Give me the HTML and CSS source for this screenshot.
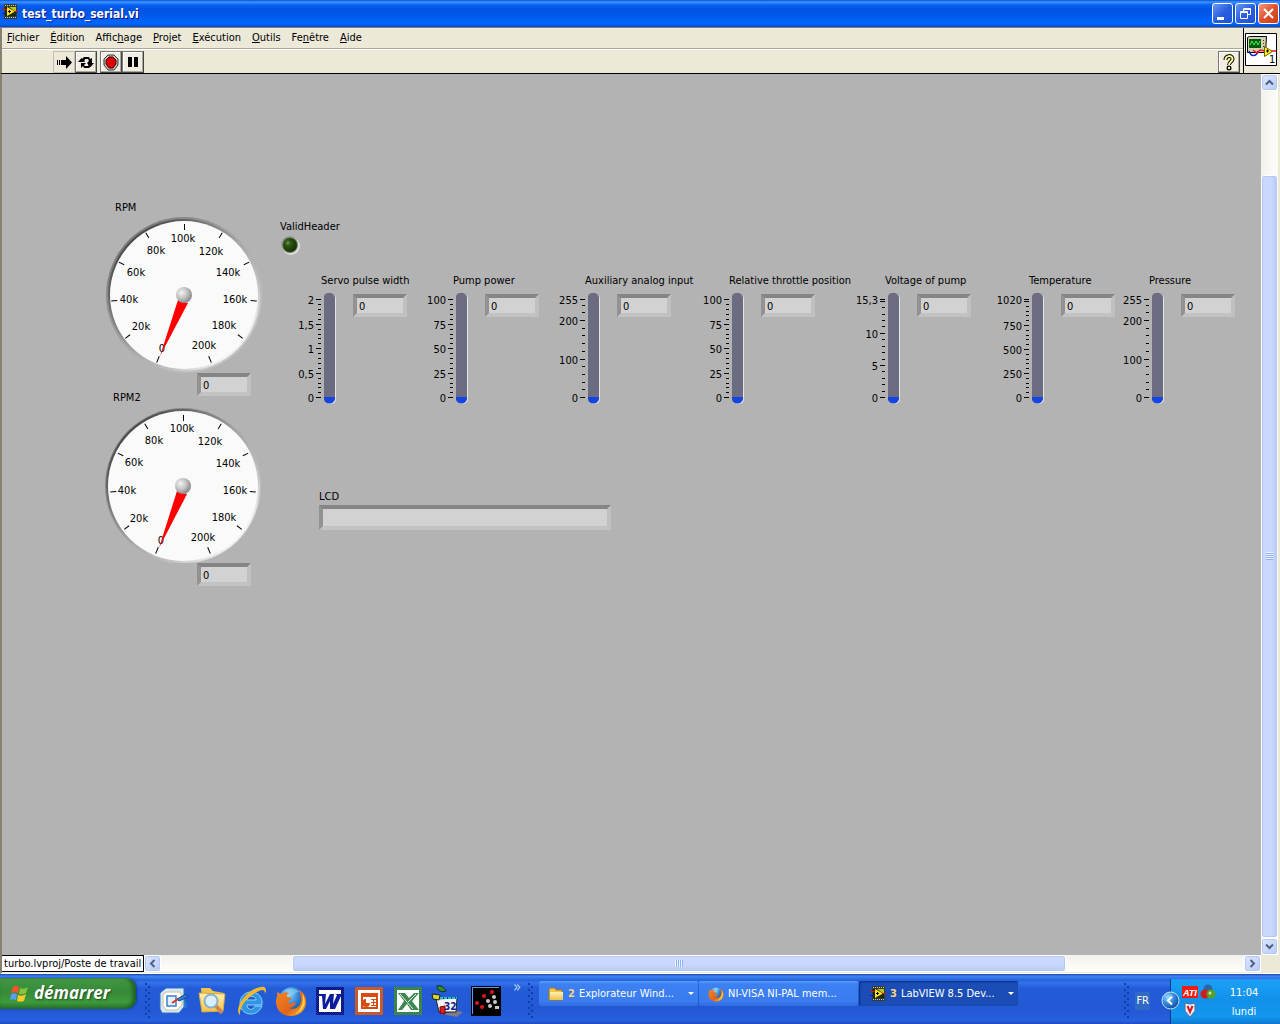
FILE: index.html
```html
<!DOCTYPE html>
<html lang="fr">
<head>
<meta charset="utf-8">
<title>test_turbo_serial.vi</title>
<link rel="stylesheet" href="styles.css">
</head>
<body>
<svg class="defs" width="0" height="0" aria-hidden="true">
  <defs>
    <linearGradient id="rim" x1="0.15" y1="0.15" x2="0.85" y2="0.85">
      <stop offset="0" stop-color="#4a4a4a"/><stop offset="0.3" stop-color="#808080"/><stop offset="0.55" stop-color="#aaaaaa"/><stop offset="0.8" stop-color="#c4c4c4"/><stop offset="1" stop-color="#f4f4f4"/>
    </linearGradient>
    <linearGradient id="rim-out" x1="0.15" y1="0.15" x2="0.85" y2="0.85">
      <stop offset="0" stop-color="#7c7c7c"/><stop offset="0.5" stop-color="#aaaaaa"/><stop offset="1" stop-color="#c6c6c6"/>
    </linearGradient>
    <radialGradient id="hub" cx="0.35" cy="0.35" r="0.7">
      <stop offset="0" stop-color="#f4f4f4"/><stop offset="0.5" stop-color="#c4c4c4"/><stop offset="1" stop-color="#858585"/>
    </radialGradient>
    <radialGradient id="led" cx="0.35" cy="0.35" r="0.7">
      <stop offset="0" stop-color="#6f9460"/><stop offset="0.3" stop-color="#2c5512"/><stop offset="1" stop-color="#143004"/>
    </radialGradient>
    <radialGradient id="blueball" cx="0.35" cy="0.3" r="0.8">
      <stop offset="0" stop-color="#9adcff"/><stop offset="0.5" stop-color="#2f84d8"/><stop offset="1" stop-color="#123c90"/>
    </radialGradient>
    <linearGradient id="fox" x1="0" y1="0" x2="1" y2="1">
      <stop offset="0" stop-color="#f28a24"/><stop offset="0.6" stop-color="#e4631a"/><stop offset="1" stop-color="#fbc52e"/>
    </linearGradient>
    <linearGradient id="folder" x1="0" y1="0" x2="0" y2="1">
      <stop offset="0" stop-color="#fff3b0"/><stop offset="1" stop-color="#eebf4c"/>
    </linearGradient>
    <symbol id="ticks5" viewBox="0 0 6 120">
      <path class="tick" d="M0 11h5v1h-5zM0 36h5v1h-5zM0 60h5v1h-5zM0 85h5v1h-5zM0 109h5v1h-5zM2 16h3v1h-3zM2 21h3v1h-3zM2 26h3v1h-3zM2 31h3v1h-3zM2 41h3v1h-3zM2 46h3v1h-3zM2 50h3v1h-3zM2 55h3v1h-3zM2 65h3v1h-3zM2 70h3v1h-3zM2 75h3v1h-3zM2 80h3v1h-3zM2 90h3v1h-3zM2 95h3v1h-3zM2 99h3v1h-3zM2 104h3v1h-3z"/>
    </symbol>
    <symbol id="ticks255" viewBox="0 0 6 120">
      <path class="tick" d="M0 11h5v1h-5zM0 32h5v1h-5zM0 71h5v1h-5zM0 109h5v1h-5zM2 17h3v1h-3zM2 24h3v1h-3zM2 40h3v1h-3zM2 47h3v1h-3zM2 55h3v1h-3zM2 63h3v1h-3zM2 78h3v1h-3zM2 86h3v1h-3zM2 94h3v1h-3zM2 101h3v1h-3z"/>
    </symbol>
    <symbol id="ticks15" viewBox="0 0 6 120">
      <path class="tick" d="M0 11h5v1h-5zM0 13h5v1h-5zM0 45h5v1h-5zM0 77h5v1h-5zM0 109h5v1h-5zM2 19h3v1h-3zM2 26h3v1h-3zM2 32h3v1h-3zM2 38h3v1h-3zM2 51h3v1h-3zM2 58h3v1h-3zM2 64h3v1h-3zM2 71h3v1h-3zM2 83h3v1h-3zM2 90h3v1h-3zM2 96h3v1h-3zM2 103h3v1h-3z"/>
    </symbol>
    <symbol id="ticks1020" viewBox="0 0 6 120">
      <path class="tick" d="M0 11h5v1h-5zM0 13h5v1h-5zM0 37h5v1h-5zM0 61h5v1h-5zM0 85h5v1h-5zM0 109h5v1h-5zM2 18h3v1h-3zM2 23h3v1h-3zM2 27h3v1h-3zM2 32h3v1h-3zM2 42h3v1h-3zM2 47h3v1h-3zM2 51h3v1h-3zM2 56h3v1h-3zM2 66h3v1h-3zM2 71h3v1h-3zM2 75h3v1h-3zM2 80h3v1h-3zM2 90h3v1h-3zM2 95h3v1h-3zM2 99h3v1h-3zM2 104h3v1h-3z"/>
    </symbol>
    <symbol id="tube" viewBox="0 0 14 120">
      <rect x="-1" y="5" width="11" height="110" rx="5" fill="#8e8e8e"/>
      <rect x="1" y="6" width="11" height="110" rx="5" fill="#e4e4e4"/>
      <rect x="0" y="5" width="11" height="110" rx="5" fill="#6b6b82"/>
      <path d="M0 109h11v1a5 5 0 0 1-11 0z" fill="#1444e2"/>
    </symbol>
    <symbol id="dial-ticks" viewBox="-78 -78 156 156">
      <g stroke="#000" stroke-width="1">
        <path d="M0 66v7" transform="rotate(22)"/><path d="M0 67v6" transform="rotate(53.6)"/><path d="M0 67v6" transform="rotate(85.2)"/><path d="M0 67v6" transform="rotate(116.8)"/><path d="M0 67v6" transform="rotate(148.4)"/><path d="M.5 -71v6"/><path d="M0 67v6" transform="rotate(211.6)"/><path d="M0 67v6" transform="rotate(243.2)"/><path d="M0 67v6" transform="rotate(274.8)"/><path d="M0 67v6" transform="rotate(306.4)"/><path d="M0 66v7" transform="rotate(338)"/>
      </g>
    </symbol>
    <symbol id="vi" viewBox="0 0 16 16">
      <path d="M2 0h13v15H2z" fill="#3a3a34"/>
      <path d="M3 1h1v1H3zM5 1h1v1H5zM7 1h1v1H7zM9 1h1v1H9zM11 1h1v1h-1zM13 1h1v1h-1zM3 13h1v1H3zM5 13h1v1H5zM7 13h1v1H7zM9 13h1v1H9zM11 13h1v1h-1zM13 13h1v1h-1z" fill="#c8c8c8"/>
      <path d="M3 3h11v9H3z" fill="#1b2b08"/><path d="M7 3h7v5z" fill="#b8c818"/>
      <path d="M5 3v9l8-4.500z" fill="#ffe41c"/>
      <path d="M0 5.500h5M12 7.500h4" stroke="#e01010"/><path d="M0 9.500h5" stroke="#1020c0"/>
      <path d="M6 7.500h3M7.500 6v3" stroke="#000"/>
    </symbol>
    <symbol id="firefox" viewBox="0 0 32 32">
      <circle cx="17" cy="15" r="13" fill="url(#blueball)"/>
      <path d="M11 5c4-2 10-2 13 2-4 0-5 3-8 4-3 1-5-2-5-6z" fill="#8fd0f4" opacity=".6"/>
      <path d="M2 6c1 2 3 2 4 3 3-2 6-2 8-1-2 1-3 3-2 4l5 1c0 2-3 2-4 4 1 2 2 2 4 1 2-1 4 0 4 1-2 1-3 4-7 4 5 3 12-1 12-8 0-5-1-8-3-10 6 2 9 7 8 14-1 7-7 12-15 12C7 31 1 25 1 17c0-4 2-6 1-11z" fill="url(#fox)"/>
      <path d="M27 8c6 9 2 18-7 21 7-5 9-12 7-21z" fill="#fcd648"/>
    </symbol>
    <symbol id="up" viewBox="0 0 9 9"><path d="M1 6.500 4.500 3 8 6.500" fill="none" stroke="#4d6185" stroke-width="2"/></symbol>
    <pattern id="dots-blue" width="2" height="2" patternUnits="userSpaceOnUse"><path d="M0 0h1v1H0zM1 1h1v1H1z" fill="#0a1060"/></pattern>
    <pattern id="dots-grey" width="2" height="2" patternUnits="userSpaceOnUse"><path d="M0 0h1v1H0zM1 1h1v1H1z" fill="#8a7c78"/></pattern>
  </defs>
</svg>

<div class="window">
  <header class="titlebar">
    <svg class="app-icon" width="16" height="16"><use href="#vi"/></svg>
    <h1>test_turbo_serial.vi</h1>
    <div class="captions">
      <button class="cap" aria-label="Réduire"><svg width="19" height="19"><path d="M4 13h7v3H4z" fill="#fff"/></svg></button>
      <button class="cap" aria-label="Restaurer"><svg width="19" height="19" fill="none" stroke="#fff"><path d="M7.500 7V4.500h7v6H12M7 5.500h8"/><path d="M4.500 7.500h7v7h-7zM4 8.500h8"/></svg></button>
      <button class="cap close" aria-label="Fermer"><svg width="19" height="19"><path d="M5 5l9 9M14 5l-9 9" stroke="#fff" stroke-width="2"/></svg></button>
    </div>
  </header>

  <div class="bars">
    <div class="bar-rows">
      <nav class="menu">
        <button><u>F</u>ichier</button><button><u>É</u>dition</button><button>Affic<u>h</u>age</button><button><u>P</u>rojet</button><button><u>E</u>xécution</button><button><u>O</u>utils</button><button>Fe<u>n</u>être</button><button><u>A</u>ide</button>
      </nav>
      <div class="tools">
        <button class="tool flat" aria-label="Exécuter"><svg width="18" height="17"><path d="M2 6h1v5H2zM4 6h1v5H4zM6 6h5V2l6 6.500-6 6.500v-4H6z" fill="#000"/></svg></button>
        <button class="tool" aria-label="Exécuter en continu"><svg width="18" height="17"><path d="M4 8V6l3-3h5l1 2 2-1v5h-5l2-2-1-2H8L7 8zM15 9v2l-3 3H7l-1-2-2 2V9h5L7 11l1 1h3l1-3z" fill="#000"/><path d="M1 8h7L4.500 4zM10 9h7l-3.500 4z" fill="#000"/></svg></button>
        <button class="tool stop" aria-label="Abandonner"><svg width="18" height="17"><path d="M6 1h6l4 4v6l-4 5H6l-4-5V5z" fill="#c8c8c8" stroke="#333"/><path d="M7 3h4l3 3v4l-3 4H7l-3-4V6z" fill="#e00000" stroke="#400"/></svg></button>
        <button class="tool" aria-label="Pause"><svg width="18" height="17"><path d="M4 3h4v10H4zM10 3h4v10h-4z" fill="#000"/></svg></button>
        <button class="tool help" aria-label="Aide contextuelle"><svg width="18" height="17"><path d="M5.500 6c0-5 7-5 7-1 0 3-3.500 2.500-3.500 6" fill="none" stroke="#000" stroke-width="4"/><circle cx="9" cy="14" r="2.500"/><path d="M5.500 6c0-5 7-5 7-1 0 3-3.500 2.500-3.500 6" fill="none" stroke="#ffff90" stroke-width="2"/><circle cx="9" cy="14" r="1.200" fill="#ffff90"/></svg></button>
      </div>
    </div>
    <div class="vi-pane">
      <svg width="32" height="33">
        <path d="M.5.5h31v32H.5z" fill="#fff" stroke="#000"/>
        <path d="M2.500 4.500l2-1h17l-1 16h-18z" fill="#d4d0b0" stroke="#000"/>
        <path d="M4 6h12v9H4z" fill="#005a10"/><path d="M5 12l2-4 2 4 2-4 2 4 2-4" fill="none" stroke="#4cf04c"/>
        <path d="M18 7h1v1h-1zM18 10h1v1h-1zM18 13h1v1h-1z" fill="#333"/>
        <path d="M4 18c2 7 8 5 9 0" fill="none" stroke="#1028c0" stroke-width="1.500"/><path d="M8 17l4 3 3-3 6 1M26 18h5" fill="none" stroke="#f01818" stroke-width="1.500"/>
        <path d="M19.500 13.500l8 5-8 5z" fill="#ffee20" stroke="#706000"/><path d="M21 18h3M22.500 16.500v3" stroke="#000"/>
        <text x="24" y="30">1</text>
      </svg>
    </div>
  </div>

  <div class="work">
    <main class="panel">
      <div class="gauges">
        <section class="gauge">
          <label for="rpm">RPM</label>
          <svg width="156" height="157" class="dial">
            <circle cx="78" cy="79" r="78" fill="url(#rim-out)"/><circle cx="78" cy="79" r="76" fill="url(#rim)"/><circle cx="78" cy="79" r="74" fill="#fafafa"/>
            <use href="#dial-ticks" x="0" y="1" width="156" height="156"/>
            <g text-anchor="middle"><text x="77" y="26">100k</text><text x="50" y="38">80k</text><text x="30" y="60">60k</text><text x="23" y="87">40k</text><text x="35" y="114">20k</text><text x="56" y="136">0</text><text x="98" y="133">200k</text><text x="118" y="113">180k</text><text x="129" y="87">160k</text><text x="122" y="60">140k</text><text x="105" y="39">120k</text></g>
            <path d="M72 84l10 3-28 53z" fill="#f00"/><circle cx="78" cy="79" r="8" fill="url(#hub)"/>
          </svg>
          <input id="rpm" class="num" value="0" readonly>
        </section>
        <section class="gauge wide">
          <label for="rpm2">RPM2</label>
          <svg width="157" height="157" class="dial">
            <circle cx="78" cy="80" r="78" fill="url(#rim-out)"/><circle cx="78" cy="80" r="77" fill="url(#rim)"/><circle cx="78" cy="80" r="75" fill="#fafafa"/>
            <use href="#dial-ticks" x="0" y="2" width="156" height="156"/>
            <g text-anchor="middle"><text x="77" y="26">100k</text><text x="49" y="38">80k</text><text x="29" y="60">60k</text><text x="22" y="88">40k</text><text x="34" y="116">20k</text><text x="56" y="138">0</text><text x="98" y="135">200k</text><text x="119" y="115">180k</text><text x="130" y="88">160k</text><text x="123" y="61">140k</text><text x="105" y="39">120k</text></g>
            <path d="M72 85l10 3-28 54z" fill="#f00"/><circle cx="78" cy="80" r="8" fill="url(#hub)"/>
          </svg>
          <input id="rpm2" class="num" value="0" readonly>
        </section>
      </div>

      <div class="signals">
        <div class="valid">
          <span>ValidHeader</span>
          <svg width="21" height="21"><circle cx="10" cy="10" r="9" fill="#989898"/><circle cx="11" cy="11" r="9" fill="#dcdcdc"/><circle cx="10" cy="10" r="8" fill="#707a68"/><circle cx="10" cy="10" r="7" fill="url(#led)"/></svg>
        </div>
        <div class="meters">
          <section class="meter"><label for="m1">Servo pulse width</label><div class="meter-row">
            <svg width="50" height="120"><g text-anchor="end"><text x="26" y="16">2</text><text x="26" y="41">1,5</text><text x="26" y="65">1</text><text x="26" y="90">0,5</text><text x="26" y="114">0</text></g><use href="#ticks5" x="28" width="6" height="120"/><use href="#tube" x="36" width="14" height="120"/></svg>
            <input id="m1" class="num" value="0" readonly></div></section>
          <section class="meter"><label for="m2">Pump power</label><div class="meter-row">
            <svg width="50" height="120"><g text-anchor="end"><text x="26" y="16">100</text><text x="26" y="41">75</text><text x="26" y="65">50</text><text x="26" y="90">25</text><text x="26" y="114">0</text></g><use href="#ticks5" x="28" width="6" height="120"/><use href="#tube" x="36" width="14" height="120"/></svg>
            <input id="m2" class="num" value="0" readonly></div></section>
          <section class="meter"><label for="m3">Auxiliary analog input</label><div class="meter-row">
            <svg width="50" height="120"><g text-anchor="end"><text x="26" y="16">255</text><text x="26" y="37">200</text><text x="26" y="76">100</text><text x="26" y="114">0</text></g><use href="#ticks255" x="28" width="6" height="120"/><use href="#tube" x="36" width="14" height="120"/></svg>
            <input id="m3" class="num" value="0" readonly></div></section>
          <section class="meter"><label for="m4">Relative throttle position</label><div class="meter-row">
            <svg width="50" height="120"><g text-anchor="end"><text x="26" y="16">100</text><text x="26" y="41">75</text><text x="26" y="65">50</text><text x="26" y="90">25</text><text x="26" y="114">0</text></g><use href="#ticks5" x="28" width="6" height="120"/><use href="#tube" x="36" width="14" height="120"/></svg>
            <input id="m4" class="num" value="0" readonly></div></section>
          <section class="meter"><label for="m5">Voltage of pump</label><div class="meter-row">
            <svg width="50" height="120"><g text-anchor="end"><text x="26" y="16">15,3</text><text x="26" y="50">10</text><text x="26" y="82">5</text><text x="26" y="114">0</text></g><use href="#ticks15" x="28" width="6" height="120"/><use href="#tube" x="36" width="14" height="120"/></svg>
            <input id="m5" class="num" value="0" readonly></div></section>
          <section class="meter"><label for="m6">Temperature</label><div class="meter-row">
            <svg width="50" height="120"><g text-anchor="end"><text x="26" y="16">1020</text><text x="26" y="42">750</text><text x="26" y="66">500</text><text x="26" y="90">250</text><text x="26" y="114">0</text></g><use href="#ticks1020" x="28" width="6" height="120"/><use href="#tube" x="36" width="14" height="120"/></svg>
            <input id="m6" class="num" value="0" readonly></div></section>
          <section class="meter"><label for="m7">Pressure</label><div class="meter-row">
            <svg width="50" height="120"><g text-anchor="end"><text x="26" y="16">255</text><text x="26" y="37">200</text><text x="26" y="76">100</text><text x="26" y="114">0</text></g><use href="#ticks255" x="28" width="6" height="120"/><use href="#tube" x="36" width="14" height="120"/></svg>
            <input id="m7" class="num" value="0" readonly></div></section>
        </div>
        <div class="lcd"><label for="lcd">LCD</label><input id="lcd" class="num" value="" readonly></div>
      </div>
    </main>
    <div class="vscroll">
      <button class="sb" aria-label="Haut"><svg width="9" height="9"><use href="#up"/></svg></button>
      <div class="space-a"></div>
      <div class="thumb v"><i></i></div>
      <button class="sb down" aria-label="Bas"><svg width="9" height="9"><use href="#up"/></svg></button>
    </div>
  </div>

  <div class="foot">
    <div class="path">turbo.lvproj/Poste de travail</div>
    <div class="hscroll">
      <button class="sb left" aria-label="Gauche"><svg width="9" height="9"><use href="#up"/></svg></button>
      <div class="space-b"></div>
      <div class="thumb h"><i></i></div>
      <div class="space-c"></div>
      <button class="sb right" aria-label="Droite"><svg width="9" height="9"><use href="#up"/></svg></button>
    </div>
    <div class="corner"></div>
  </div>
</div>

<footer class="taskbar">
  <button class="start">
    <svg width="20" height="20" viewBox="0 0 20 20"><path d="M3 3c3-2 4-1 6 0L8 9C5 8 4 8 1 9z" fill="#f0552a"/><path d="M10 4c3 1 5 1 8-1l-2 6c-3 2-5 1-7 1z" fill="#86c440"/><path d="M1 10c3-1 4-1 6 0l-1 6c-3-1-4-1-6 0z" fill="#5a9cf0"/><path d="M8 11c3 1 5 1 8-1l-2 7c-3 1-5 1-7 0z" fill="#fbcb2c"/></svg>
    <span>démarrer</span>
  </button>
  <svg class="grip" width="5" height="38"><use href="#grip-dots"/><path id="grip-dots" d="M0 0h2v2H0zM3 3h2v2H3zM0 6h2v2H0zM3 9h2v2H3zM0 12h2v2H0zM3 15h2v2H3zM0 18h2v2H0zM3 21h2v2H3zM0 24h2v2H0zM3 27h2v2H3zM0 30h2v2H0zM3 33h2v2H3z" fill="#0f3cb0"/></svg>
  <div class="quick">
    <a href="#" aria-label="Bureau"><svg width="32" height="32"><path d="M4 6l20-4 5 20-20 7-6-5z" fill="#2c7cd8"/><path d="M8 3h18v19l-5 6H4l-2-4V8z" fill="#d4e8fb" stroke="#2a70c8"/><path d="M8 7h14l2 4v9l-5 5H8l-3-4V10z" fill="#fff" stroke="#d0c088"/><path d="M9 11h9v10H9z" fill="#e4f0ff" stroke="#3a80d8" stroke-width="1.500"/><path d="M19 14l9-5 2 3-9 4z" fill="#2a7cd0" stroke="#124a98"/><path d="M14 18l6-4" stroke="#e03010" stroke-width="2"/></svg></a>
    <a href="#" aria-label="Explorateur"><svg width="32" height="32"><path d="M4 3h9l3 3 11 2-1 18-20 1z" fill="#f1c34c"/><path d="M2 8l26 1-2 17-21 1z" fill="url(#folder)" stroke="#d8a83c"/><circle cx="14" cy="16" r="6.500" fill="#d8eefc" stroke="#8ab0cc" stroke-width="2"/><path d="M19 21l6 7" stroke="#d08850" stroke-width="4"/></svg></a>
    <a href="#" aria-label="Internet Explorer"><svg width="32" height="32"><path d="M26 21c-2 5-6 8-11 8C8 29 4 24 4 18 4 12 9 7 15 7c7 0 12 5 11 13H11c0 5 6 6 8 1zM11 15h9c0-5-9-5-9 0z" fill="#2f96e4" fill-rule="evenodd" stroke="#8cd0fa"/><path d="M4 30C-3 25 10 4 25 2c5-1 6 3 4 7 0-4-2-5-6-3C13 10 3 21 4 30z" fill="#f4b82c"/></svg></a>
    <a href="#" aria-label="Firefox"><svg width="32" height="32"><use href="#firefox"/></svg></a>
    <a href="#" aria-label="Word"><svg width="32" height="32"><path d="M2 2h28v28H2z" fill="#1428b8"/><path d="M2 2h28v28H2z" fill="url(#dots-blue)"/><path d="M5 5h22v22H5z" fill="#fff"/><path d="M5 9h7l-1 10 5-10h4l-1 10 4-9-2-1h7l-1 2-6 13h-5V16l-4 8H9L8 11H5z" fill="#0c1c9c"/></svg></a>
    <a href="#" aria-label="PowerPoint"><svg width="32" height="32"><path d="M2 2h28v28H2z" fill="#e04c10"/><path d="M2 2h28v28H2z" fill="url(#dots-grey)" opacity=".5"/><path d="M5 5h22v22H5z" fill="#fff"/><path d="M9 9h15v14H9z" fill="#fff" stroke="#d84c14" stroke-width="2"/><path d="M8 8h17v4H8z" fill="#d84c14"/><path d="M13 14a4 4 0 1 0 4 4h-4z" fill="#d84c14"/><path d="M18 14.500h5M18 17.500h5M18 20.500h5M20.500 14v7" stroke="#d84c14"/></svg></a>
    <a href="#" aria-label="Excel"><svg width="32" height="32"><path d="M2 2h28v28H2z" fill="#208838"/><path d="M2 2h28v28H2z" fill="url(#dots-grey)" opacity=".5"/><path d="M5 5h22v22H5z" fill="#fff"/><path d="M6 8h7l4 5 5-5h5l-7 8 7 9h-8l-4-6-5 6H6l6-9z" fill="#3c8850"/><path d="M8 9l13 15M24 9l-8 8" stroke="#e4f0e4"/></svg></a>
    <a href="#" aria-label="Agenda"><svg width="32" height="32"><path d="M10 29l16-3 6 1-6 5z" fill="#7c7c88"/><path d="M5 14l21-1-1 14H8z" fill="#f4f4f8" stroke="#222"/><path d="M9 13h17" stroke="#20c0d0" stroke-width="2" stroke-dasharray="3 1"/><path d="M1 9l8 1-1 5-6-1z" fill="#d8d828" stroke="#222"/><path d="M6 1c4-1 7 1 9 5-5 2-9-1-9-5z" fill="#28902c" stroke="#222"/><path d="M9 22l5-1v8l-5-1z" fill="#e02020" stroke="#700"/><text x="13" y="25" class="tiny">32</text></svg></a>
    <a href="#" aria-label="Terminal"><svg width="32" height="32"><path d="M1.500 1.500h29v29h-29z" fill="#000" stroke="#000"/><path d="M2.500 29V2.500H29" fill="none" stroke="#5c9cf0"/><g fill="#e01818"><circle cx="22" cy="7" r="2"/><circle cx="14" cy="11" r="2"/><circle cx="7" cy="18" r="2"/><circle cx="12" cy="22" r="2"/></g><g fill="#c8c8c8"><circle cx="24" cy="12" r="2"/><circle cx="18" cy="16" r="2"/><circle cx="25" cy="17" r="2"/><circle cx="20" cy="21" r="2"/><path d="M25 21h4v3h-4z"/></g></svg></a>
  </div>
  <span class="more">»</span>
  <svg class="grip" width="5" height="38"><use href="#grip-dots"/></svg>
  <div class="tasks">
    <button class="task"><svg width="16" height="16"><path d="M1 4l1-2h5l1 2h6v10H1z" fill="#f0c450" stroke="#a87818"/><path d="M2 6h13v8H2z" fill="url(#folder)"/></svg><b>2</b><span>Explorateur Wind...</span><i class="drop"></i></button>
    <button class="task"><svg width="16" height="16"><use href="#firefox" width="16" height="16"/></svg><span>NI-VISA NI-PAL mem...</span></button>
    <button class="task active"><svg width="16" height="16"><use href="#vi"/></svg><b>3</b><span>LabVIEW 8.5 Dev...</span><i class="drop"></i></button>
  </div>
  <svg class="grip" width="5" height="38"><use href="#grip-dots"/></svg>
  <span class="lang">FR</span>
  <div class="tray">
    <button class="chevron" aria-label="Afficher les icônes"><svg width="19" height="19"><circle cx="9.500" cy="9.500" r="8.500" fill="url(#blueball)" stroke="#bfe4fc"/><path d="M11 5.500L7 9.500l4 4" fill="none" stroke="#fff" stroke-width="2"/></svg></button>
    <div class="tray-icons">
      <svg width="16" height="16"><path d="M0 2h16v12H0z" fill="#f01c10"/><text x="1" y="12" class="ati">ATI</text></svg>
      <svg width="16" height="16"><circle cx="8" cy="5" r="4.500" fill="#2c64a8"/><circle cx="5" cy="10" r="4.500" fill="#d01c1c"/><circle cx="11" cy="10" r="4.500" fill="#58a028"/><circle cx="10" cy="9" r="1.500" fill="#c8e8a0"/></svg>
      <svg width="16" height="16"><path d="M3 1l5 1 5-1v8l-5 6-5-6z" fill="#e8ecf4" stroke="#5a6a90"/><path d="M5.500 4L8 10l2.500-6" fill="none" stroke="#d81c1c" stroke-width="2"/></svg>
    </div>
    <div class="clock"><span>11:04</span><span>lundi</span></div>
  </div>
</footer>
</body>
</html>
```
FILE: styles.css
```css
* { box-sizing: border-box; }
body {
  margin: 0;
  min-height: 100vh;
  display: flex;
  flex-direction: column;
  font: 11px/16px "DejaVu Sans Condensed", "Noto Sans", sans-serif;
  color: #000;
}
button { font: inherit; color: inherit; border: 0; padding: 0; background: none; }
svg { display: block; flex: none; }
text { font-size: 11px; fill: #000; }
.defs { position: absolute; }
.tick { fill: #000; }

.window { flex: 1; display: flex; flex-direction: column; min-width: 0; }

.titlebar {
  height: 27px;
  display: flex;
  align-items: center;
  padding: 0 1px 0 2px;
  background: linear-gradient(#0a4fd8 0, #3d95ff 2px, #0a62f0 5px, #0054e3 9px, #0058ea 15px, #0066ff 23px, #0060f4 25px, #003fc0 27px);
  color: #fff;
}
.titlebar h1 { margin: 0 0 0 4px; flex: 1; font: bold 12px/20px "DejaVu Sans Condensed", sans-serif; text-shadow: 1px 1px #0f1089; }
.app-icon { margin-bottom: 4px; }
.captions { display: flex; gap: 2px; }
.cap {
  width: 21px; height: 21px;
  border: 1px solid #fff; border-radius: 3px;
  background: linear-gradient(135deg, #6d95f5, #2a60e0 50%, #2050d4);
}
.cap.close { background: linear-gradient(135deg, #f09a80, #e0502c 50%, #c83c14); }

.bars { display: flex; background: #ece9d8; border-left: 2px solid #85826f; border-top: 1px solid #85826f; border-bottom: 1px solid #000; }
.bar-rows { flex: 1; }
.menu { display: flex; gap: 11px; height: 21px; padding: 1px 5px 0; border-bottom: 1px solid #aca899; }
.menu button { line-height: 16px; height: 17px; }
.tools { display: flex; height: 24px; padding: 1px 3px 0 51px; border-top: 1px solid #fff; }
.tool {
  width: 22px; height: 22px;
  padding: 1px;
  border: 1px solid; border-color: #777 #444 #444 #777;
  background: #f2efe2;
  box-shadow: inset -1px -1px #aca899, inset 1px 1px #fff;
}
.tool.flat { border-color: #c4c1b2; background: none; box-shadow: none; }
.tool.stop { margin-left: 3px; }
.tool.help { margin-left: auto; }
.vi-pane { width: 37px; padding: 5px 2px 0 1px; border-left: 1px solid #000; }

.work { flex: 1; display: flex; border-left: 2px solid #85826f; border-right: 2px solid #ece9d8; }
.panel { flex: 1; min-width: 0; display: flex; background: #b3b3b3; padding: 125px 0 0 104px; }
.panel label, .valid span { display: block; height: 16px; line-height: 18px; }
.gauges { width: 174px; flex: none; }
.gauge label { padding-left: 9px; margin-bottom: 1px; }
.gauge .num { display: block; margin-left: 91px; }
.gauge + .gauge { margin-top: -7px; }
.gauge.wide label { padding-left: 7px; }
.gauge.wide .dial { margin-left: -1px; }
.num {
  width: 54px; height: 23px;
  margin: 0; padding: 1px 1px 0 2px;
  font: inherit; color: #000;
  background: #d2d2d2;
  border: 4px solid; border-color: #858585 #c0c0c0 #c2c2c2 #929292;
  border-radius: 0; outline: 0;
}
.signals { flex: 1; min-width: 0; padding-top: 19px; }
.valid { height: 54px; }
.valid svg { margin-top: 1px; }
.meters { display: grid; grid-template-columns: 132px 132px 144px 156px 144px 120px 1fr; padding-left: 8px; }
.meter label { padding-left: 33px; white-space: nowrap; }
.meter-row { display: flex; gap: 15px; }
.meter-row .num { margin-top: 6px; flex: none; }
.lcd { margin: 80px 0 0 39px; }
.lcd .num { width: 292px; height: 25px; margin-top: 1px; display: block; }

.vscroll { width: 17px; display: flex; flex-direction: column; background: linear-gradient(90deg, #f3f1ec, #fefefb); }
.sb {
  width: 17px; height: 17px; flex: none;
  display: grid; place-items: center;
  border: 1px solid #fff; border-radius: 3px;
  background: linear-gradient(135deg, #dde6ff, #b8cbf6);
  box-shadow: inset 0 0 0 1px #b4c8f6;
}
.sb.down svg { transform: rotate(180deg); }
.sb.left svg { transform: rotate(-90deg); }
.sb.right svg { transform: rotate(90deg); }
.space-a { flex: 84; }
.thumb { border: 1px solid #fff; border-radius: 3px; display: grid; place-items: center; box-shadow: inset 0 0 0 1px #b4c8f6; }
.thumb.v { flex: 763; background: linear-gradient(90deg, #c9d8fc 0 60%, #b6cbf8); }
.thumb.h { flex: 773; background: linear-gradient(#c9d8fc 0 60%, #b6cbf8); }
.thumb.v i { width: 7px; height: 8px; background: repeating-linear-gradient(#eef4fe 0 1px, #8cb0f8 1px 2px); }
.thumb.h i { width: 8px; height: 7px; background: repeating-linear-gradient(90deg, #eef4fe 0 1px, #8cb0f8 1px 2px); }

.foot { display: flex; height: 19px; background: #ece9d8; border-left: 2px solid #85826f; border-bottom: 1px solid #fff; }
.path { height: 17px; width: 142px; border: 1px solid #000; border-left: 0; background: #fff; padding-left: 2px; line-height: 15px; white-space: nowrap; }
.hscroll { flex: 1; height: 17px; display: flex; background: linear-gradient(#f3f1ec, #fefefb); }
.space-b { flex: 131; }
.space-c { flex: 178; }
.corner { width: 19px; }

.taskbar {
  height: 50px;
  display: flex;
  color: #fff;
  background: linear-gradient(#1941a5 0, #3a80ee 2px, #3a80ee 3px, #2663dc 6px, #3272ea 9px, #245cd8 14px, #2258d4 36px, #2660e0 47px, #1d4ab8 50px);
}
.start {
  width: 136px; height: 31px; margin-top: 4px;
  display: flex; align-items: center; gap: 4px; padding-left: 10px;
  border-radius: 0 10px 10px 0;
  background: linear-gradient(#5aa85c 0, #3d9440 4px, #388a38 14px, #3c9a3c 24px, #2c7430 31px);
  box-shadow: inset -3px 0 4px #1c5c20, 1px 0 2px #143c90;
  font: italic bold 17px/24px "Open Sans", sans-serif;
  text-shadow: 1px 1px 2px #1a4a1a;
}
.start span { margin-top: -2px; }
.grip { margin: 9px 8px 0 9px; }
.quick { display: flex; gap: 7px; padding-top: 11px; }
.quick a { display: block; }
.more { margin: 5px 0 0 11px; font-size: 15px; color: #b8d4fc; width: 10px; }
.more + .grip { margin: 9px 6px 0 5px; }
.tasks { flex: 1; display: flex; gap: 1px; padding-top: 7px; }
.task {
  flex: 0 1 159px; min-width: 0; height: 25px;
  display: flex; align-items: center; gap: 4px; padding: 0 4px 0 9px;
  border-radius: 2px;
  background: linear-gradient(#5c9cff 0, #3c80f4 3px, #3a7cf0 20px, #306ce0 25px);
  text-align: left; white-space: nowrap;
}
.task b { color: #ffd27c; }
.task.active { background: #1a4eb6; box-shadow: inset 1px 1px 2px #0c2c80; padding-left: 11px; }
.drop { margin-left: auto; border: 3px solid transparent; border-top-color: #fff; border-bottom: 0; }
.lang { align-self: flex-start; margin: 18px 20px 0 0; padding: 1px; background: #316ac5; }
.tasks + .grip { margin: 9px 6px 0 0; }
.tray {
  display: flex; width: 110px; margin-top: 5px;
  background: linear-gradient(#1c9cf0 0, #189ef4 6px, #1290ea 20px, #1296ee 38px, #1078d0 45px);
  border-left: 1px solid #0c3c90;
}
.chevron { margin: 12px 0 0 -10px; align-self: flex-start; }
.tray-icons { display: flex; flex-wrap: wrap; gap: 2px; width: 36px; margin: 5px 0 0 2px; align-content: flex-start; }
.clock { flex: 1; display: flex; flex-direction: column; align-items: center; gap: 3px; padding: 6px 10px 0 0; }
.ati { font: italic bold 9px "Liberation Sans", sans-serif; fill: #fff; }
.tiny { font-size: 10px; font-weight: bold; fill: #10207c; }
```
